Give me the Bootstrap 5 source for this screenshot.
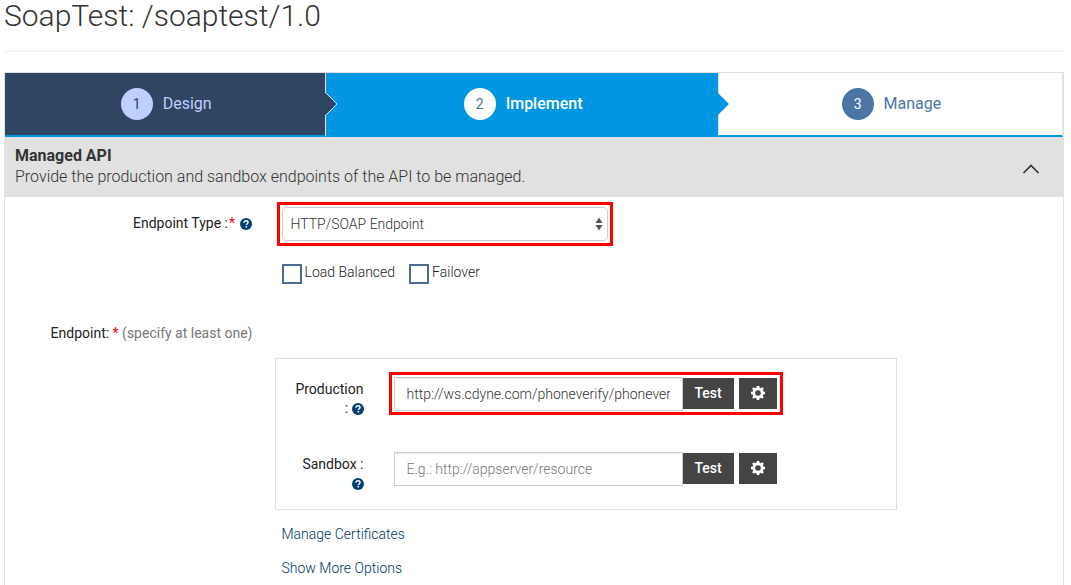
<!DOCTYPE html>
<html lang="en">
<head>
<meta charset="utf-8">
<meta name="viewport" content="width=device-width, initial-scale=1">
<title>SoapTest: /soaptest/1.0</title>
<link href="https://cdn.jsdelivr.net/npm/bootstrap@5.3.0/dist/css/bootstrap.min.css" rel="stylesheet">
<style>
body { font-family: Roboto, "Liberation Sans", sans-serif; font-size: 14px; line-height: 20px; color: #222; background: #fff; }
.page { padding: 0 7px 0 4px; }
.page-title { font-size: 30px; font-weight: 300; line-height: 32px; color: #333; padding-bottom: 19px; border-bottom: 1px solid #eee; margin-bottom: 20px; }
.panel { border: 1px solid #e1e1e1; border-bottom: 0; }
.step { height: 64px; padding-left: 2px; font-size: 16px; color: #4c74a5; text-decoration: none; border-bottom: 2px solid #0096e1; border-right: 1px solid #e1e1e1; gap: 10px; }
.step-num { width: 32px; height: 32px; font-size: 14px; background: #4c74a5; color: #fff; }
.step-design { flex: 321 1 0; background: #304562; color: #bed0ff; }
.step-design .step-num { background: #bed0ff; color: #304562; }
.step-implement { flex: 393 1 0; background: #0096e1; color: #fff; font-weight: 500; }
.step-implement .step-num { background: #fff; color: #4c74a5; font-weight: 400; }
.step-manage { flex: 344 1 0; }
.step-arrow { position: absolute; left: 100%; top: 18px; z-index: 1; }
.section-head { height: 60px; background: #e1e1e1; color: #333; padding: 8px 23px 10px 10px; font-size: 16px; line-height: 21px; }
.section-head h2 { font-size: 16px; font-weight: 700; line-height: 21px; }
.section-head p { font-weight: 300; }
.toggle { color: #333; line-height: 1; margin-top: 6px; }
.form-area { padding-top: 5px; }
.form-name { padding: 11px 18px 0 0; text-align: right; }
.form-name .required { margin: 0 1px; }
.required { color: #f00; }
.hint { color: #777; }
.help { color: #003e73; line-height: 1; vertical-align: -2px; }
.help svg { display: block; }
.highlight { border: 3px solid #f00; padding: 2px; }
.type-box { width: 336px; margin-left: 7px; }
.type-select { height: 34px; border: 1px solid #ccc; border-radius: 4px; font-size: 14px; font-weight: 300; line-height: 20px; color: #333; padding: 6px 24px 6px 8px;
  background: #fff url("data:image/svg+xml,%3Csvg xmlns='http://www.w3.org/2000/svg' width='8' height='14'%3E%3Cpath d='M.5 6 4 .5 7.500 6zM.5 8h7L4 13.500z' fill='%23555'/%3E%3C/svg%3E") no-repeat right 4px center / 8px 14px; }
.checks { padding: 16px 0 0 12px; gap: 14px; font-weight: 300; }
.checks .form-check-input { width: 20px; height: 20px; margin: 2px 3px 0 0; border: 2px solid #4d6a92; border-radius: 0; float: none; }
.endpoint-name { padding: 39px 17px 0 0; text-align: right; }
.endpoint-box { width: 622px; margin: 15px 0 0 5px; padding: 13px 0 16px; gap: 29px; border: 1px solid #e1e1e1; }
.url-name { width: 88px; padding-top: 8px; margin-right: 25px; text-align: right; line-height: 19px; }
.url-row { padding: 5px; }
.url-row.highlight { padding: 2px 3px 1px 2px; }
.url-group { width: 340px; }
.url-input { height: 34px; border: 1px solid #ccc; border-radius: 0; font-size: 14px; font-weight: 300; line-height: 20px; color: #333; padding: 6px 12px; box-shadow: inset 0 1px 1px rgba(0, 0, 0, .075); }
.url-input::placeholder { color: #777; }
.btn-dark-flat { flex: 0 0 51px; height: 31px; margin-top: 1px; border: 0; border-radius: 0; background: #444; color: #fff; font-size: 14px; font-weight: 500; line-height: 20px; padding: 5px 0 6px; }
.btn-dark-flat:hover { background: #333; color: #fff; }
.btn-gear { flex-basis: 38px; margin-left: 5px; }
.btn-gear svg { display: block; margin: 0 auto; }
.more-links { padding: 14px 0 14px 12px; gap: 14px; font-weight: 300; }
.more-links a { color: #003568; text-decoration: none; }
</style>
</head>
<body>
<svg class="d-none">
  <symbol id="help-icon" viewBox="0 0 12 12"><circle cx="6" cy="6" r="6" fill="currentColor"/><path d="M4 4.8C4 3.5 4.8 2.8 6 2.8s2 .7 2 1.7c0 1.2-1.6 1.3-1.6 2.5" fill="none" stroke="#fff" stroke-width="1.5"/><path d="M5.500 8h1.600v1.500H5.500z" fill="#fff"/></symbol>
  <symbol id="gear-icon" viewBox="0 0 14 14"><path fill="currentColor" fill-rule="evenodd" d="M5.8 0h2.4l.4 1.8 1.1.5 1.6-1 1.5 1.5-1 1.6.5 1.1 1.7.3v2.4l-1.7.4-.5 1.1 1 1.6-1.5 1.5-1.6-1-1.1.5-.4 1.7H5.8l-.4-1.7-1.1-.5-1.6 1-1.5-1.5 1-1.6-.5-1.1L0 8.2V5.8l1.7-.3.5-1.1-1-1.6 1.5-1.5 1.6 1 1.1-.5zM7 4.2a2.8 2.8 0 1 0 0 5.6 2.8 2.8 0 0 0 0-5.6z"/></symbol>
</svg>
<div class="page d-flex flex-column min-vh-100">
  <h1 class="page-title">SoapTest: /soaptest/1.0</h1>
  <main class="panel flex-grow-1">
    <nav class="d-flex" aria-label="Steps">
      <a href="#design" class="step step-design position-relative d-flex align-items-center justify-content-center">
        <span class="step-num rounded-circle d-flex align-items-center justify-content-center">1</span>Design
        <svg class="step-arrow" width="13" height="26" viewBox="0 0 13 26"><path d="M0 1.500 11.500 13 0 24.500z" fill="#304562"/><path d="M.5 1.500 12 13 .5 24.500" fill="none" stroke="#e1e1e1"/></svg>
      </a>
      <a href="#implement" class="step step-implement position-relative d-flex align-items-center justify-content-center" aria-current="step">
        <span class="step-num rounded-circle d-flex align-items-center justify-content-center">2</span>Implement
        <svg class="step-arrow" width="13" height="26" viewBox="0 0 13 26"><path d="M-1 1 11 13-1 25z" fill="#0096e1"/><path d="M0 1.500 11.500 13 0 24.500" fill="none" stroke="#e1e1e1" stroke-width=".6"/></svg>
      </a>
      <a href="#manage" class="step step-manage d-flex align-items-center justify-content-center">
        <span class="step-num rounded-circle d-flex align-items-center justify-content-center">3</span>Manage
      </a>
    </nav>
    <div class="section-head d-flex align-items-center justify-content-between">
      <div>
        <h2 class="mb-0">Managed API</h2>
        <p class="mb-0">Provide the production and sandbox endpoints of the API to be managed.</p>
      </div>
      <button type="button" class="toggle btn p-0 border-0" aria-label="Collapse section"><svg class="d-block" width="18" height="10" viewBox="0 0 18 10"><path d="M1.500 9 9 1.500 16.500 9" fill="none" stroke="currentColor" stroke-width="1.700"/></svg></button>
    </div>
    <form class="form-area">
      <div class="row g-0">
        <div class="col-3 form-name">
          <label for="endpoint-type">Endpoint Type :<span class="required">*</span></label>
          <button type="button" class="help btn p-0 border-0" aria-label="Endpoint type help"><svg width="12" height="12"><use href="#help-icon"/></svg></button>
        </div>
        <div class="col-9">
          <div class="highlight type-box">
            <select id="endpoint-type" class="form-select type-select"><option>HTTP/SOAP Endpoint</option><option>REST Endpoint</option></select>
          </div>
          <div class="checks d-flex">
            <div class="d-flex"><input class="form-check-input" type="checkbox" id="load-balanced"><label for="load-balanced">Load Balanced</label></div>
            <div class="d-flex"><input class="form-check-input" type="checkbox" id="failover"><label for="failover">Failover</label></div>
          </div>
        </div>
      </div>
      <div class="row g-0">
        <div class="col-3 endpoint-name">Endpoint: <span class="required">*</span> <span class="hint">(specify at least one)</span></div>
      </div>
      <div class="row g-0">
        <div class="col-9 offset-3">
          <div class="endpoint-box d-flex flex-column">
            <div class="d-flex align-items-start">
              <div class="url-name"><label for="production">Production</label> <span class="text-nowrap">: <button type="button" class="help btn p-0 border-0" aria-label="Production help"><svg width="12" height="12"><use href="#help-icon"/></svg></button></span></div>
              <div class="url-row highlight d-flex align-items-start">
                <div class="url-group d-flex align-items-start">
                  <input id="production" type="text" class="form-control url-input" value="http://ws.cdyne.com/phoneverify/phoneverify.asmx">
                  <button type="button" class="btn btn-dark-flat">Test</button>
                </div>
                <button type="button" class="btn btn-dark-flat btn-gear" aria-label="Production settings"><svg width="14" height="14"><use href="#gear-icon"/></svg></button>
              </div>
            </div>
            <div class="d-flex align-items-start">
              <div class="url-name"><label for="sandbox">Sandbox :</label><br><button type="button" class="help btn p-0 border-0" aria-label="Sandbox help"><svg width="12" height="12"><use href="#help-icon"/></svg></button></div>
              <div class="url-row d-flex align-items-start">
                <div class="url-group d-flex align-items-start">
                  <input id="sandbox" type="text" class="form-control url-input" placeholder="E.g.: http://appserver/resource">
                  <button type="button" class="btn btn-dark-flat">Test</button>
                </div>
                <button type="button" class="btn btn-dark-flat btn-gear" aria-label="Sandbox settings"><svg width="14" height="14"><use href="#gear-icon"/></svg></button>
              </div>
            </div>
          </div>
          <div class="more-links d-flex flex-column align-items-start">
            <a href="#certificates">Manage Certificates</a>
            <a href="#options">Show More Options</a>
          </div>
        </div>
      </div>
    </form>
  </main>
</div>
<script src="https://cdn.jsdelivr.net/npm/bootstrap@5.3.0/dist/js/bootstrap.bundle.min.js"></script>
</body>
</html>
